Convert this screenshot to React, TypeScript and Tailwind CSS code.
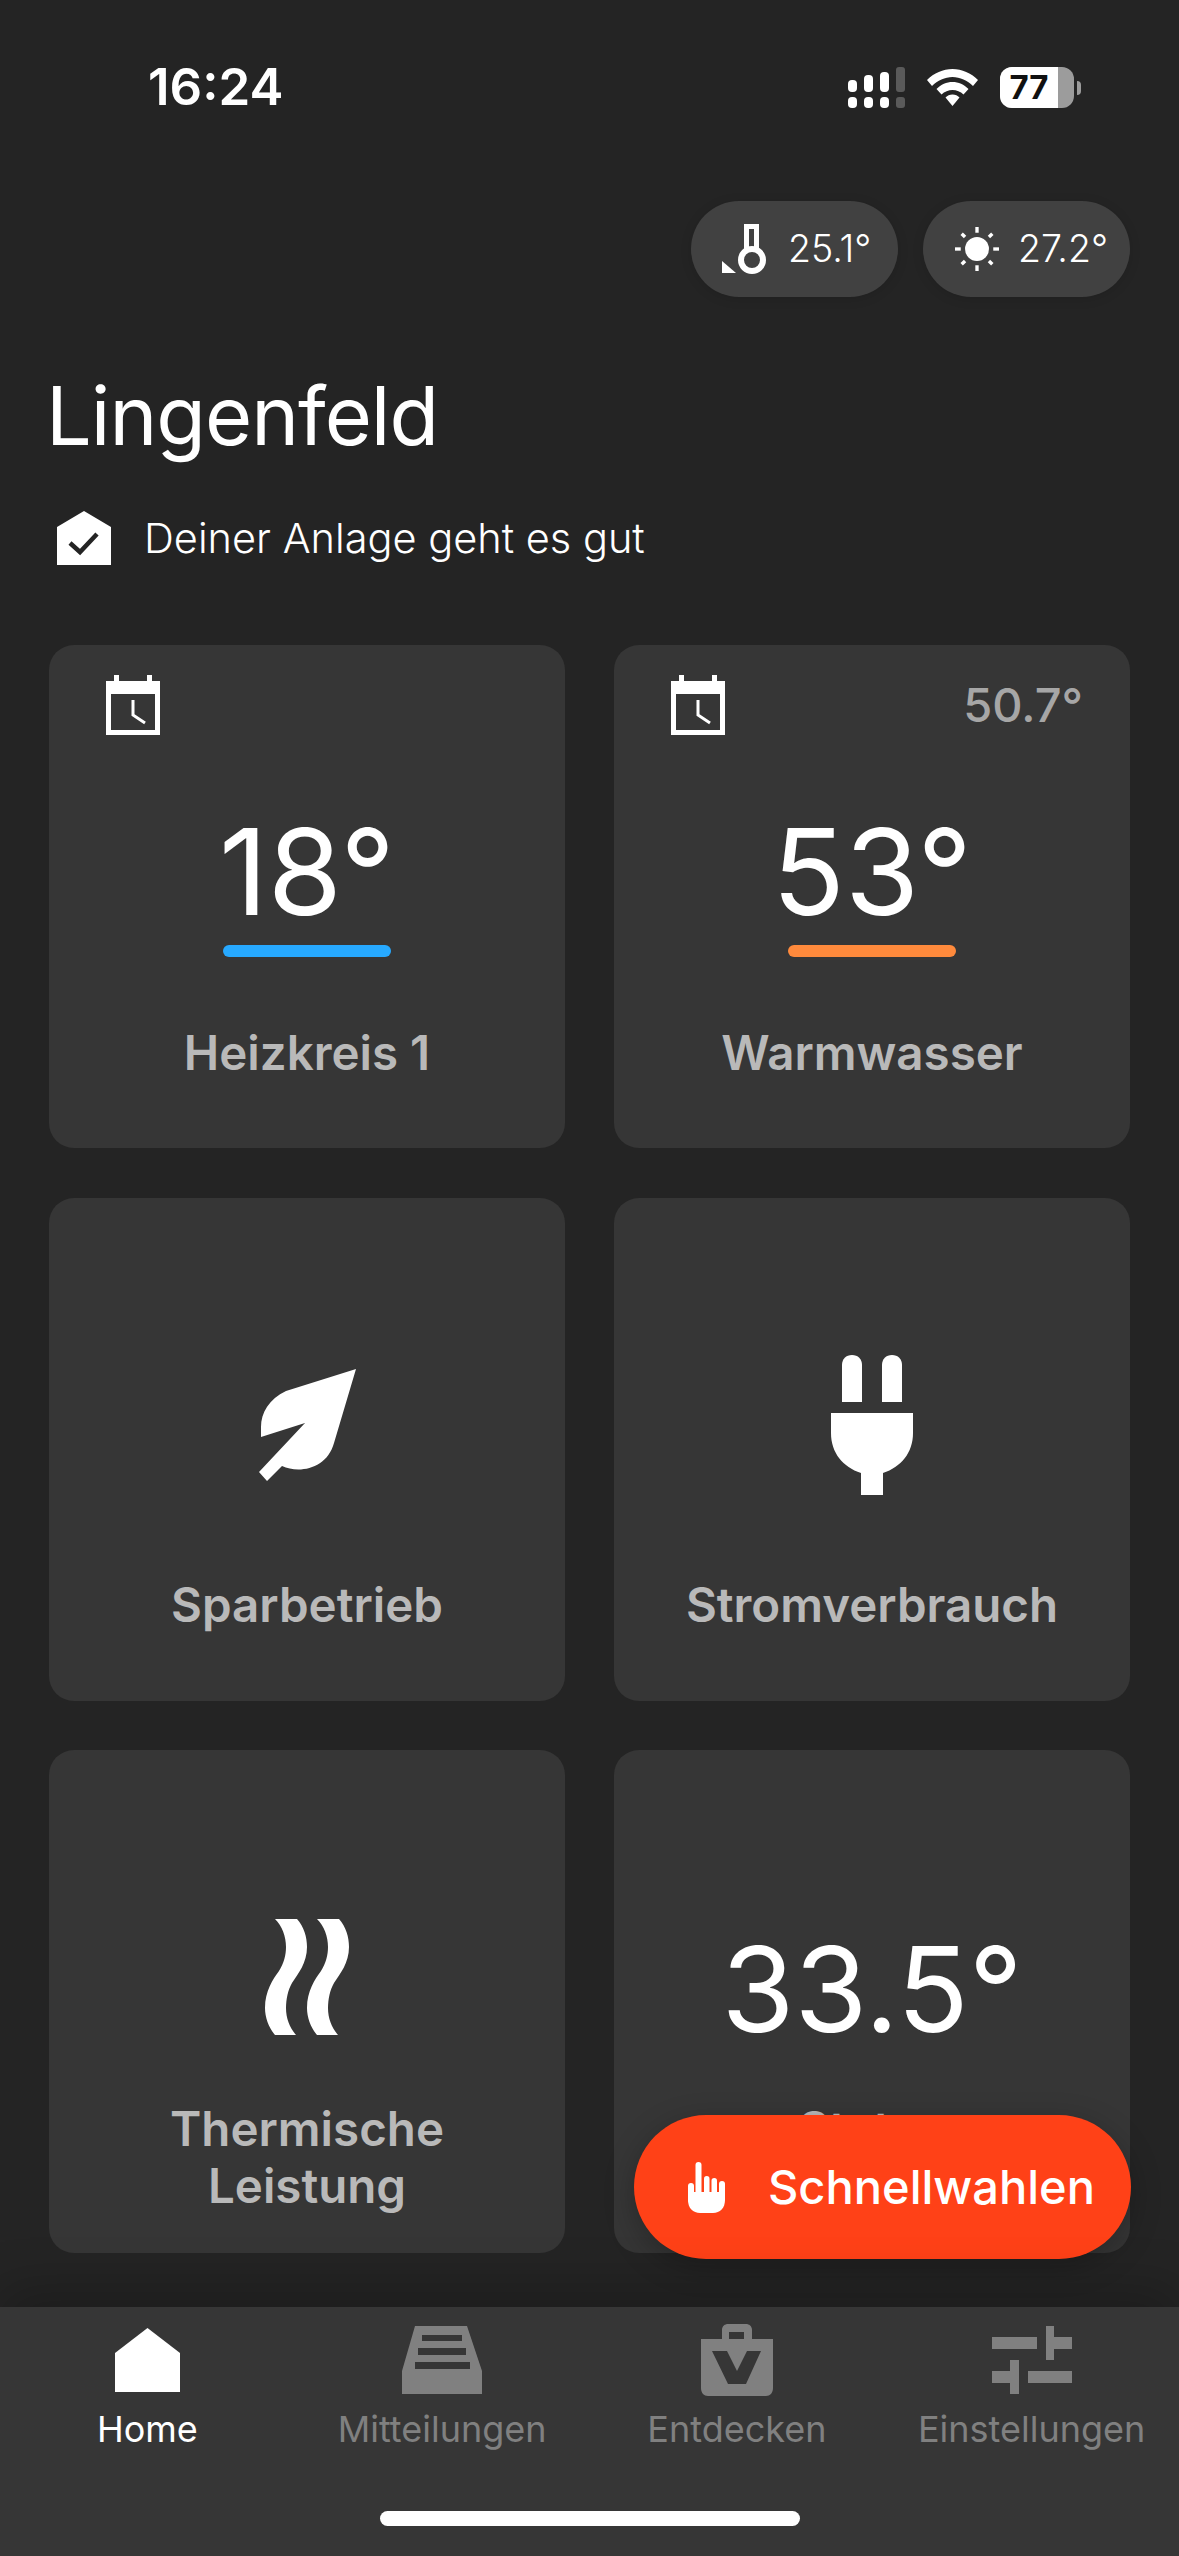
import type { ReactNode } from 'react';

const inter = "font-['Inter',sans-serif]";

function Signal() {
  return (
    <svg width="57" height="41" viewBox="0 0 57 41">
      <g fill="#fff">
        <rect x="0" y="13" width="9" height="12" rx="4" />
        <rect x="16" y="8" width="9" height="17" rx="4" />
        <rect x="32" y="5" width="9" height="20" rx="4" />
        <rect x="0" y="30" width="9" height="11" rx="4" />
        <rect x="16" y="30" width="9" height="11" rx="4" />
        <rect x="32" y="30" width="9" height="11" rx="4" />
      </g>
      <g fill="#5a5a5a">
        <rect x="48" y="0" width="9" height="25" rx="3" />
        <rect x="48" y="30" width="9" height="11" rx="3" />
      </g>
    </svg>
  );
}

function Wifi() {
  return (
    <svg width="51" height="37" viewBox="0 0 51 37">
      <path d="M25.500 0C35 0 44 4 51 11L46 17C40.500 11.500 33 8 25.500 8C18 8 10.500 11.500 5 17L0 11C7 4 16 0 25.500 0Z" fill="#fff" />
      <path d="M25.500 13C31.500 13 37 15.500 41.500 20L36.500 25.500C33.500 22.500 29.500 21 25.500 21C21.500 21 17.500 22.500 14.500 25.500L9.500 20C14 15.500 19.500 13 25.500 13Z" fill="#fff" />
      <path d="M25.500 25.500C28.500 25.500 30.500 26.500 32.500 28.500L25.500 37L18.500 28.500C20.500 26.500 22.500 25.500 25.500 25.500Z" fill="#fff" />
    </svg>
  );
}

function Battery() {
  return (
    <div className="flex items-center gap-[3px]">
      <div className="flex h-[41px] w-[74px] overflow-hidden rounded-[12px] bg-[#9c9c9c]">
        <div className="flex w-[58px] items-center justify-center bg-white text-[33px] leading-none font-bold text-[#111]">77</div>
      </div>
      <div className="h-[14px] w-[4px] rounded-r-full bg-[#9c9c9c]" />
    </div>
  );
}

function Thermo() {
  return (
    <svg width="44" height="50" viewBox="0 0 44 50">
      <path d="M0 37L14 49H0Z" fill="#fff" />
      <path d="M24.500 27V2.500H34.500V27" fill="none" stroke="#fff" strokeWidth="5" />
      <circle cx="30" cy="36" r="11" fill="none" stroke="#fff" strokeWidth="6" />
    </svg>
  );
}

function Sun() {
  return (
    <svg width="44" height="44" viewBox="0 0 46 46" className="-mr-[3px] ml-[1px]">
      <circle cx="23" cy="23" r="12.500" fill="#fff" />
      <g stroke="#fff" strokeWidth="3.500">
        <path d="M23 0V6" />
        <path d="M23 40V46" />
        <path d="M0 23H6" />
        <path d="M40 23H46" />
        <path d="M7 7L10.500 10.500" />
        <path d="M39 7L35.500 10.500" />
        <path d="M7 39L10.500 35.500" />
        <path d="M39 39L35.500 35.500" />
      </g>
    </svg>
  );
}

function HomeCheck() {
  return (
    <svg width="54" height="54" viewBox="0 0 54 54">
      <path d="M27 0L54 16V54H0V16Z" fill="#fff" />
      <path d="M13 32L23 41L40 23" fill="none" stroke="#242424" strokeWidth="4.500" />
    </svg>
  );
}

function Calendar() {
  return (
    <svg width="54" height="60" viewBox="0 0 54 60" className="absolute top-[30px] left-[57px]">
      <path d="M8 0H13V6H41V0H46V6H54V60H0V6H8Z" fill="#fff" />
      <rect x="5" y="19" width="44" height="36" fill="#363636" />
      <path d="M27 25V40L39 48" fill="none" stroke="#fff" strokeWidth="3" />
    </svg>
  );
}

function Leaf() {
  return (
    <svg width="97" height="112" viewBox="0 0 97 112">
      <path d="M97 0L27 22C10 30 2 44 2 58L2 68L46 54L0 103L8 112L23 97C40 105 68 100 75 74Z" fill="#fff" />
    </svg>
  );
}

function Plug() {
  return (
    <svg width="82" height="140" viewBox="0 0 82 140">
      <path d="M11 47V10C11 4 15 0 21 0C27 0 31 4 31 10V47Z" fill="#fff" />
      <path d="M51 47V10C51 4 55 0 61 0C67 0 71 4 71 10V47Z" fill="#fff" />
      <path d="M0 58H82V78C82 98 70 112 52 118V140H30V118C12 112 0 98 0 78Z" fill="#fff" />
    </svg>
  );
}

function Waves() {
  const wave = 'M10 0H32C39 8 42 18 42 28C42 44 33 55 27 64C23 71 21 80 21 89C21 100 25 109 31 116H10C4 109 0 99 0 89C0 72 8 60 14 52C19 44 21 36 21 28C21 17 17 7 10 0Z';
  return (
    <svg width="84" height="116" viewBox="0 0 84 116">
      <path d={wave} fill="#fff" />
      <path d={wave} fill="#fff" transform="translate(42 0)" />
    </svg>
  );
}

function Hand() {
  return (
    <svg width="37" height="51" viewBox="0 0 37 51">
      <g fill="#fff">
        <rect x="7.500" y="0" width="6" height="36" rx="3" />
        <rect x="16" y="14" width="5.500" height="20" rx="2.700" />
        <rect x="23.500" y="16" width="5.500" height="20" rx="2.700" />
        <rect x="31" y="19" width="6" height="20" rx="3" />
        <rect x="0" y="21" width="6" height="20" rx="3" />
        <path d="M0 30H37V38C37 46 32 51 25 51H12C5 51 0 46 0 38Z" />
      </g>
    </svg>
  );
}

function TabHome() {
  return (
    <svg width="65" height="64" viewBox="0 0 65 64">
      <path d="M32.500 0L65 25V64H0V25Z" fill="#fff" />
    </svg>
  );
}

function TabInbox() {
  return (
    <svg width="80" height="68" viewBox="0 0 80 68">
      <path fillRule="evenodd" d="M13 0H65L80 45V68H0V45ZM20 9V15H60V9ZM16 22V29H64V22ZM13 36V43H68V36Z" fill="#808080" />
    </svg>
  );
}

function TabBag() {
  return (
    <svg width="72" height="72" viewBox="0 0 72 72">
      <path fillRule="evenodd" d="M0 15H21V6C21 2 24 0 27 0H45C48 0 51 2 51 6V15H72V64C72 69 69 72 65 72H7C3 72 0 69 0 64ZM28 8V15H43V8ZM11 27L27 60H45L60 27H46L36 47L26 27Z" fill="#808080" />
    </svg>
  );
}

function TabSliders() {
  return (
    <svg width="80" height="68" viewBox="0 0 80 68">
      <g fill="#808080">
        <rect x="0" y="11" width="45" height="12" />
        <rect x="54" y="0" width="8" height="34" />
        <rect x="62" y="11" width="18" height="12" />
        <rect x="18" y="34" width="9" height="34" />
        <rect x="0" y="45" width="18" height="12" />
        <rect x="36" y="45" width="44" height="12" />
      </g>
    </svg>
  );
}

function Pill({ icon, value }: { icon: ReactNode; value: string }) {
  return (
    <div className="flex h-[96px] w-[207px] items-center gap-[22px] rounded-[48px] bg-[#414141] pl-[31px] shadow-[0_2px_12px_rgba(0,0,0,0.12)]">
      {icon}
      <span className="text-[37.5px] leading-none font-[350] text-white">{value}</span>
    </div>
  );
}

function Card({ children, label, schedule, corner }: { children: ReactNode; label: ReactNode; schedule?: boolean; corner?: string }) {
  return (
    <div className="relative flex h-[503px] flex-col items-center rounded-[25px] bg-[#363636]">
      {schedule && <Calendar />}
      {corner && <span className="absolute top-[36px] right-[47px] text-[47px] leading-[48px] font-medium text-[#a6a6a6]">{corner}</span>}
      <div className="flex h-[351px] w-full items-center justify-center pt-[103px]">{children}</div>
      <div className="flex h-[112px] items-center text-center text-[47.5px] leading-[57px] font-[570] text-[#b9b9b9]">{label}</div>
    </div>
  );
}

function Setpoint({ value, bar }: { value: string; bar: string }) {
  return (
    <div className="flex flex-col items-center pt-[25px]">
      <span className="text-[120px] leading-[120px] font-[370] text-white">{value}</span>
      <div className={`mt-[13px] h-[12px] w-[168px] rounded-full ${bar}`} />
    </div>
  );
}

function Tab({ icon, label, active }: { icon: ReactNode; label: string; active?: boolean }) {
  return (
    <div className="flex flex-col items-center">
      <div className="flex h-[72px] items-center justify-center">{icon}</div>
      <span className={`mt-[11px] text-[36px] leading-[44px] ${active ? 'text-white' : 'text-[#808080]'}`}>{label}</span>
    </div>
  );
}

export default function App() {
  return (
    <div className={`relative flex h-[2556px] w-[1179px] flex-col overflow-hidden bg-[#242424] ${inter}`}>
      <div className="flex h-[201px] items-start justify-between pt-[63px] pr-[98px] pl-[148px]">
        <span className="text-[51px] leading-[48px] font-semibold text-white">16:24</span>
        <div className="flex items-center gap-[22px] pt-[4px]">
          <Signal />
          <Wifi />
          <Battery />
        </div>
      </div>

      <div className="flex justify-end gap-[25px] pr-[49px]">
        <Pill icon={<Thermo />} value="25.1°" />
        <Pill icon={<Sun />} value="27.2°" />
      </div>

      <h1 className="mt-[70px] pl-[46px] text-[81px] leading-[98px] font-normal tracking-[-1px] text-white">Lingenfeld</h1>

      <div className="mt-[38px] flex h-[70px] items-center gap-[33px] pl-[57px] text-[41.500px] font-[350] text-white">
        <HomeCheck />
        <span>Deiner Anlage geht es gut</span>
      </div>

      <div className="mt-[72px] grid grid-cols-2 gap-x-[49px] gap-y-[49.5px] px-[49px]">
        <Card label="Heizkreis 1" schedule>
          <Setpoint value="18°" bar="bg-[#27a9ff]" />
        </Card>
        <Card label="Warmwasser" schedule corner="50.7°">
          <Setpoint value="53°" bar="bg-[#ff8a3c]" />
        </Card>
        <Card label="Sparbetrieb">
          <Leaf />
        </Card>
        <Card label="Stromverbrauch">
          <Plug />
        </Card>
        <Card label={<span>Thermische<br />Leistung</span>}>
          <Waves />
        </Card>
        <Card label={<span>Status<br />&nbsp;</span>}>
          <span className="pt-[24px] text-[118px] leading-[120px] font-[370] text-white">33.5°</span>
        </Card>
      </div>

      <div className="absolute top-[2115px] left-[634px] flex h-[144px] w-[497px] items-center gap-[43px] rounded-[72px] bg-[#ff4117] pl-[54px] text-[47px] font-medium text-white shadow-[0_8px_30px_rgba(0,0,0,0.25)]">
        <Hand />
        <span>Schnellwahlen</span>
      </div>

      <div className="absolute inset-x-0 bottom-0 flex h-[249px] flex-col bg-[#363636] shadow-[0_-16px_50px_rgba(0,0,0,0.22)]">
        <div className="grid grid-cols-4 pt-[17px]">
          <Tab icon={<TabHome />} label="Home" active />
          <Tab icon={<TabInbox />} label="Mitteilungen" />
          <Tab icon={<TabBag />} label="Entdecken" />
          <Tab icon={<TabSliders />} label="Einstellungen" />
        </div>
        <div className="mx-auto mt-[60px] h-[15px] w-[420px] rounded-full bg-white" />
      </div>
    </div>
  );
}
